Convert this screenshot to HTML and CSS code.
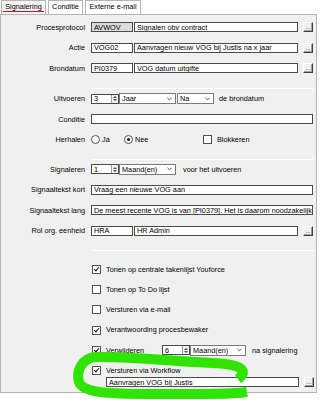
FILE: index.html
```html
<!DOCTYPE html>
<html>
<head>
<meta charset="utf-8">
<link rel="stylesheet" href="styles.css">
</head>
<body>
<div class="tabs">
  <div class="tab active">Signalering</div>
  <div class="tab t2">Conditie</div>
  <div class="tab t3">Externe e-mail</div>
</div>
<div class="panel">
  <div class="row">
    <div class="lbl">Procesprotocol</div>
    <div class="box code gray">AVWOV</div>
    <div class="box desc">Signalen obv contract</div>
    <div class="btn">...</div>
  </div>
  <div class="row">
    <div class="lbl">Actie</div>
    <div class="box code">VOG02</div>
    <div class="box desc">Aanvragen nieuw VOG bij Justis na x jaar</div>
    <div class="btn">...</div>
  </div>
  <div class="row">
    <div class="lbl">Brondatum</div>
    <div class="box code">PI0379</div>
    <div class="box desc">VOG datum uitgifte</div>
    <div class="btn">...</div>
  </div>
  <div class="sep s1"></div>
  <div class="row">
    <div class="lbl">Uitvoeren</div>
    <div class="spin"><span class="spin-val">3</span><span class="spin-arrows"><i class="up"></i><i class="dn"></i></span></div>
    <div class="select sel-unit">Jaar<svg class="chev" viewBox="0 0 6 4"><polyline points="0.5,0.5 3,3 5.5,0.5"/></svg></div>
    <div class="select sel-na">Na<svg class="chev" viewBox="0 0 6 4"><polyline points="0.5,0.5 3,3 5.5,0.5"/></svg></div>
    <div class="txt after">de brondatum</div>
  </div>
  <div class="row">
    <div class="lbl">Conditie</div>
    <div class="box full"></div>
  </div>
  <div class="row">
    <div class="lbl">Herhalen</div>
    <div class="radio"></div><div class="txt rl">Ja</div>
    <div class="radio on"></div><div class="txt rl">Nee</div>
    <div class="check blk"></div><div class="txt cl">Blokkeren</div>
  </div>
  <div class="sep s2"></div>
  <div class="row">
    <div class="lbl">Signaleren</div>
    <div class="spin"><span class="spin-val">1</span><span class="spin-arrows"><i class="up"></i><i class="dn"></i></span></div>
    <div class="select sel-unit">Maand(en)<svg class="chev" viewBox="0 0 6 4"><polyline points="0.5,0.5 3,3 5.5,0.5"/></svg></div>
    <div class="txt after2">voor het uitvoeren</div>
  </div>
  <div class="row">
    <div class="lbl">Signaaltekst kort</div>
    <div class="box full">Vraag een nieuwe VOG aan</div>
  </div>
  <div class="row">
    <div class="lbl">Signaaltekst lang</div>
    <div class="box full">De meest recente VOG is van [PI0379]. Het is daarom noodzakelijk d</div>
  </div>
  <div class="row">
    <div class="lbl">Rol org. eenheid</div>
    <div class="box code">HRA</div>
    <div class="box desc">HR Admin</div>
    <div class="btn">...</div>
  </div>
  <div class="sep s3"></div>
  <div class="crow"><div class="check on"></div><div class="txt cl">Tonen op centrale takenlijst Youforce</div></div>
  <div class="crow"><div class="check"></div><div class="txt cl">Tonen op To Do lijst</div></div>
  <div class="crow"><div class="check"></div><div class="txt cl">Versturen via e-mail</div></div>
  <div class="crow"><div class="check on"></div><div class="txt cl">Verantwoording procesbewaker</div></div>
  <div class="crow">
    <div class="check on"></div><div class="txt cl w-verw">Verwijderen</div>
    <div class="spin"><span class="spin-val">6</span><span class="spin-arrows"><i class="up"></i><i class="dn"></i></span></div>
    <div class="select sel-unit2">Maand(en)<svg class="chev" viewBox="0 0 6 4"><polyline points="0.5,0.5 3,3 5.5,0.5"/></svg></div>
    <div class="txt after3">na signalering</div>
  </div>
  <div class="crow wf"><div class="check on"></div><div class="txt cl">Versturen via Workflow</div></div>
  <div class="wfrow">
    <div class="box wfbox">Aanvragen VOG bij Justis</div>
    <div class="btn">...</div>
  </div>
</div>
<svg class="marker" viewBox="0 0 321 400" width="321" height="400">
  <path d="M238 379 C249 371 242 364 212 363 C172 361 122 356 96 357 C81 358 76 372 79 382 C83 393 110 394 150 394 C190 394 228 395 247 392"/>
</svg>
</body>
</html>
```

FILE: styles.css
```css
* { box-sizing: border-box; }
html, body { margin: 0; padding: 0; }
body {
  width: 321px;
  height: 400px;
  overflow: hidden;
  position: relative;
  background: #ffffff;
  font-family: "Liberation Sans", Arial, sans-serif;
  font-size: 7.3px;
  color: #000;
  line-height: 1;
}
.tabs {
  display: flex;
  height: 14px;
  padding-left: 1px;
  gap: 2px;
}
.tab {
  width: 35px;
  height: 14px;
  border: 1px solid #b4b4b4;
  border-bottom: none;
  display: flex;
  align-items: center;
  justify-content: center;
  white-space: nowrap;
  background: #ffffff;
  padding-bottom: 1px;
}
.tab.t3 { width: 56px; }
.tab.active {
  width: 45px;
  background: #f4f4f4;
  position: relative;
}
.tab.active::after {
  content: "";
  position: absolute;
  left: 1px;
  right: 1px;
  bottom: 2px;
  height: 1px;
  background: #e0001a;
}
.panel {
  width: 317px;
  height: 379px;
  background: #f0f0f0;
  border: 1px solid #b4b4b4;
  padding-top: 2px;
}
.row, .crow {
  display: flex;
  align-items: center;
  height: 20.5px;
}
.crow { height: 20.3px; padding-left: 90px; }
.lbl {
  width: 84px;
  text-align: right;
  margin-right: 6px;
  white-space: nowrap;
}
.box {
  height: 10px;
  border: 1px solid #4a4a4a;
  background: #ffffff;
  padding: 0 2px;
  display: flex;
  align-items: center;
  white-space: nowrap;
  overflow: hidden;
}
.box.gray { background: #dcdcdc; }
.code { width: 42px; }
.desc { width: 164px; margin-left: 1px; }
.full { width: 222px; }
.btn {
  width: 10px;
  height: 10px;
  margin-left: 5px;
  background: #f0f0f0;
  border: 1px solid;
  border-color: #ffffff #404040 #404040 #ffffff;
  box-shadow: inset -1px -1px 0 #a0a0a0;
  font-size: 6px;
  display: flex;
  align-items: flex-end;
  justify-content: center;
  padding-bottom: 1px;
}
.sep {
  height: 1px;
  background: #c8c8c8;
  border-bottom: 1px solid #ffffff;
  margin-left: 90px;
  width: 223px;
}
.s1 { margin-top: 9.5px; margin-bottom: -0.5px; }
.s2 { margin-top: 8.5px; margin-bottom: -0.5px; }
.s3 { margin-top: 8.5px; margin-bottom: 8.5px; }
.spin {
  width: 28px;
  height: 10px;
  border: 1px solid #4a4a4a;
  background: #fff;
  display: flex;
  align-items: stretch;
  flex: none;
}
.spin-val { flex: 1; padding-left: 2px; display: flex; align-items: center; }
.spin-arrows {
  width: 7px;
  border-left: 1px solid #a0a0a0;
  background: #f0f0f0;
  display: flex;
  flex-direction: column;
  align-items: center;
  justify-content: center;
  gap: 1px;
}
.spin-arrows i {
  width: 0; height: 0;
  border-left: 2px solid transparent;
  border-right: 2px solid transparent;
}
.spin-arrows .up { border-bottom: 2px solid #505050; }
.spin-arrows .dn { border-top: 2px solid #505050; }
.select {
  height: 11px;
  border: 1px solid #7a7a7a;
  background: #fff;
  display: flex;
  align-items: center;
  justify-content: space-between;
  padding: 0 3px 0 2px;
  white-space: nowrap;
  flex: none;
}
.chev { width: 5px; height: 4px; fill: none; stroke: #303030; stroke-width: 1; }
.sel-unit { width: 57px; }
.sel-na { width: 37px; margin-left: 1px; }
.sel-unit2 { width: 56px; }
.txt { white-space: nowrap; }
.after { margin-left: 5px; }
.after2 { margin-left: 7px; }
.after3 { margin-left: 6px; }
.radio {
  width: 9px; height: 9px;
  border: 1px solid #505050;
  border-radius: 50%;
  background: #fff;
  position: relative;
  flex: none;
}
.radio.on::after {
  content: "";
  position: absolute;
  left: 2px; top: 2px;
  width: 3px; height: 3px;
  border-radius: 50%;
  background: #111;
}
.rl { margin-left: 2px; width: 22px; }
.check {
  width: 9px; height: 9px;
  border: 1px solid #505050;
  background: #fff;
  margin-left: 1px;
  position: relative;
  flex: none;
}
.check.on::after {
  content: "";
  position: absolute;
  left: 1.5px; top: 0px;
  width: 2px; height: 4px;
  border-right: 1.5px solid #111;
  border-bottom: 1.5px solid #111;
  transform: rotate(40deg);
}
.blk { margin-left: 46px; }
.cl { margin-left: 5px; }
.w-verw { width: 56px; }
.wf { height: 14px; margin-top: 3px; }
.wfrow {
  display: flex;
  align-items: center;
  padding-left: 105px;
  height: 10px;
}
.wfbox { width: 193px; }
.marker {
  position: absolute;
  left: 0;
  top: 0;
  pointer-events: none;
  fill: none;
  stroke: #2ee400;
  stroke-width: 10;
  stroke-linecap: butt;
  stroke-linejoin: round;
}
```
